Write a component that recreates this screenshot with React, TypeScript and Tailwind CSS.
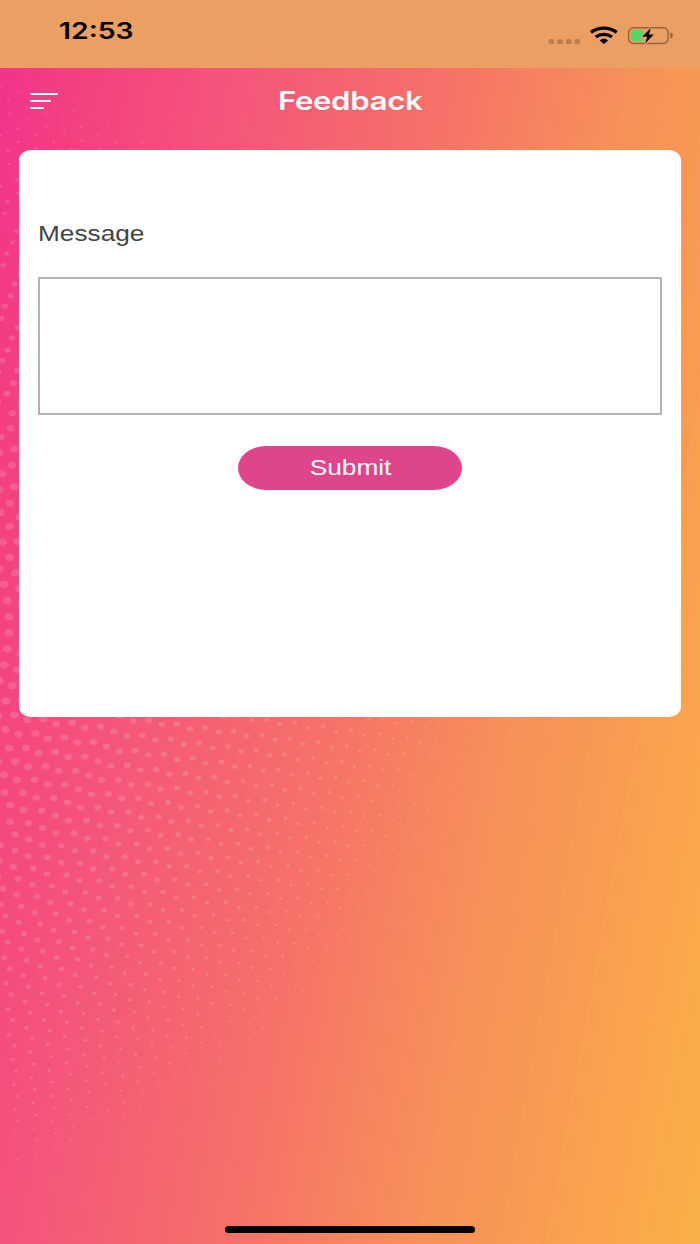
import React from "react";

// Angular position (degrees) of one dot on each ring, for rings 17 to 54.
const RING_ANGLES = [
  11.6, 21.2, 28.1, 27.9, 26.3, 26.3, 24.8, 24.8, 23.6, 23.6, 23.6, 22.6, 22.6,
  21.7, 21.8, 20.9, 21.0, 20.2, 20.3, 19.6, 19.7, 19.05, 19.2, 18.5, 18.7,
  18.07, 18.25, 17.66, 17.8, 17.3, 17.5, 16.96, 17.13, 16.64, 16.83, 16.37,
  16.54, 16.09,
];
const FIRST_RING = 17;
const RING_GAP = 11.675;
const STRETCH = 1.22;

type Dot = { x: number; y: number; r: number };

const dots: Dot[] = RING_ANGLES.flatMap((angle, i) => {
  const ring = FIRST_RING + i;
  const count = Math.round(ring * 4.525);
  const r = 0.204 * Math.pow(55 - ring, 0.8);
  const out: Dot[] = [];
  for (let n = 0; n < count; n++) {
    const a = ((angle + (n * 360) / count) * Math.PI) / 180;
    const x = -233 + STRETCH * ring * RING_GAP * Math.cos(a);
    const y = 625 + ring * RING_GAP * Math.sin(a);
    if (x > -6 && y > 62 && y < 1250) out.push({ x, y: y - 68, r });
  }
  return out;
});

function Halftone() {
  return (
    <svg className="absolute inset-0" width="700" height="1176" viewBox="0 0 700 1176" aria-hidden="true">
      <g fill="#ffffff" fillOpacity="0.145">
        {dots.map((d, i) => (
          <ellipse key={i} cx={d.x.toFixed(1)} cy={d.y.toFixed(1)} rx={(d.r * STRETCH).toFixed(2)} ry={d.r.toFixed(2)} />
        ))}
      </g>
      <g fill="none" strokeLinecap="butt">
        <path d="M631 0L418 1176" stroke="#fff" strokeOpacity=".025" strokeWidth="4" />
        <path d="M708 0L495 1176" stroke="#e08040" strokeOpacity=".05" strokeWidth="5" />
        <path d="M755 0L542 1176" stroke="#e08040" strokeOpacity=".06" strokeWidth="4" />
      </g>
    </svg>
  );
}

function StatusIcons() {
  return (
    <svg width="130" height="24" viewBox="545 23 130 24" aria-hidden="true">
      <g fill="#bb7f50">
        <rect x="548.7" y="39" width="5.4" height="5" rx="1.6" />
        <rect x="557.2" y="39" width="5.8" height="5" rx="1.6" />
        <rect x="566" y="39" width="5.6" height="5" rx="1.6" />
        <rect x="574.6" y="39" width="5.6" height="5" rx="1.6" />
      </g>
      <g fill="none" stroke="#000" strokeWidth="3.3">
        <path d="M591 32.4C598.2 26.8 609.4 26.8 616.7 32.4" />
        <path d="M595.8 37C600.4 33.4 607.3 33.4 611.9 37" />
      </g>
      <path d="M599.6 40.4C602 38.2 605.7 38.2 608.1 40.4L603.85 43.9Z" fill="#000" />
      <rect x="628.6" y="27.7" width="39.5" height="15.8" rx="5" fill="none" stroke="#96623a" strokeWidth="1.4" />
      <path d="M670.3 32.6Q673 33.2 673 35.5Q673 37.8 670.3 38.4Z" fill="#96623a" />
      <rect x="631" y="30" width="12.5" height="11.2" rx="2.8" fill="#4cd964" />
      <path
        d="M650.8 28.1L642.2 36.7H647.2L645.2 43.4L653.8 34.4H648.9Z"
        fill="#000"
        stroke="#eb9f62"
        strokeWidth="2.4"
        paintOrder="stroke"
      />
    </svg>
  );
}

export default function App() {
  return (
    <div className="flex h-[1244px] w-[700px] flex-col overflow-hidden bg-[#eb9f62] font-['Inter','Liberation_Sans',sans-serif]">
      <header className="flex h-[68px] shrink-0 items-start justify-between pl-[59px] pr-[25px]">
        <span className="mt-[17px] origin-left scale-x-[1.26] text-[22.5px] font-semibold leading-7 text-black">
          12:53
        </span>
        <div className="mt-[23px]">
          <StatusIcons />
        </div>
      </header>

      <main className="relative flex grow flex-col bg-[linear-gradient(100.3deg,#f2338c_0%,#f3417f_9%,#f44f7c_21%,#f45879_28%,#f5656f_39%,#f67467_51%,#f6835f_60%,#f79059_69%,#f89655_76%,#faa24e_87%,#f9b047_100%)]">
        <Halftone />
        <nav className="relative grid h-[82px] shrink-0 grid-cols-[1fr_auto_1fr] items-start px-[30px]">
          <button aria-label="Menu" className="mt-[24.5px] flex w-7 flex-col gap-[5px]">
            <span className="h-[2px] w-7 rounded-full bg-white" />
            <span className="h-[2px] w-[21px] rounded-full bg-white" />
            <span className="h-[2px] w-[14px] rounded-full bg-white" />
          </button>
          <h1 className="mt-[17px] scale-x-[1.22] text-[25.5px] font-semibold leading-8 tracking-[-0.01em] text-white">
            Feedback
          </h1>
        </nav>

        <form className="relative mx-[19px] flex h-[566.5px] shrink-0 flex-col items-center rounded-[12px/10px] bg-white px-[19px] font-['Liberation_Sans',Arial,sans-serif]">
          <label
            htmlFor="message"
            className="mt-[68px] origin-left scale-x-[1.22] self-start text-[21.5px] leading-8 text-[#444444]"
          >
            Message
          </label>
          <textarea
            id="message"
            className="mt-[27px] h-[137.5px] w-full shrink-0 resize-none border-2 border-[#b3b3b3] bg-white outline-none"
          />
          <button
            type="button"
            className="mt-[31px] flex h-[44px] w-[224px] items-center justify-center rounded-[28px/22px] bg-[#df458b] text-white"
          >
            <span className="scale-x-[1.22] pl-px text-[21.5px] leading-7">Submit</span>
          </button>
        </form>

        <div className="relative mx-auto mb-[11.5px] mt-auto h-[7px] w-[250px] rounded-full bg-black" />
      </main>
    </div>
  );
}
